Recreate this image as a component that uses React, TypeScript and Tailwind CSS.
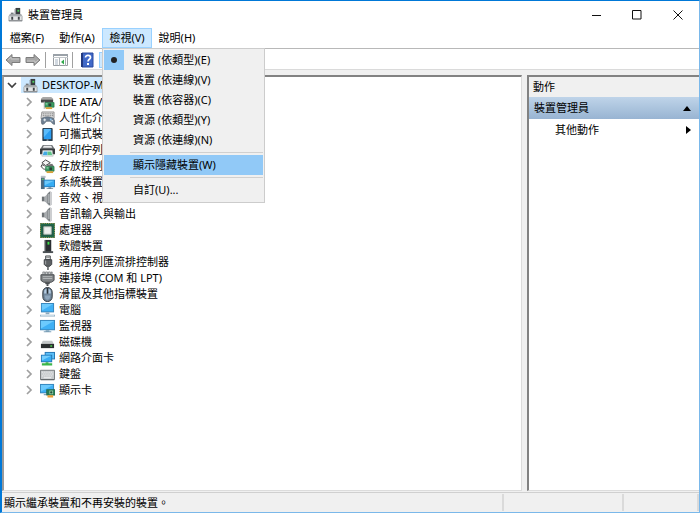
import React, { useState } from "react";

interface IconProps {
  className?: string;
}

type Icon = React.FC<IconProps>;

const Svg: React.FC<{ className?: string; children: React.ReactNode }> = ({
  className = "size-[15px]",
  children,
}) => (
  <svg viewBox="0 0 16 16" className={`shrink-0 ${className}`} aria-hidden="true">
    {children}
  </svg>
);

const ComputerIcon: Icon = ({ className }) => (
  <Svg className={className}>
    <path d="M8 1h5v8H8z" fill="#3a3e42" />
    <path d="M7 2h1v7H7z" fill="#8d9296" />
    <path d="M10 3h2v2h-2z" fill="#4fcf5e" />
    <path d="M3 6h3v3H3z" fill="#777c80" />
    <path d="M1 10l1-2h12l1 2v5H1z" fill="#e3e5e6" stroke="#8f9397" strokeWidth=".8" />
    <path d="M2 8h12v2H2z" fill="#a9adb0" />
    <path d="M3.500 10.500h2v3h-2zM10.500 10.500h2v3h-2z" fill="#3f4347" />
    <path d="M1 14.500h14" stroke="#85898d" />
  </Svg>
);

const IdeIcon: Icon = () => (
  <Svg>
    <path d="M1 4l2-2h9l2 2v2H1z" fill="#a8a8a8" />
    <path d="M1 5h13v3H1z" fill="#474747" />
    <path d="M5 8h10v5H5z" fill="#3b9c63" stroke="#1f6d40" strokeWidth=".7" />
    <path d="M9 9h3v3H9z" fill="#2b3f36" />
    <path d="M6 9h2v1H6z" fill="#b8e0c5" />
    <path d="M6 13h7v2H6z" fill="#d8a33c" />
    <path d="M4 7h1v8H4z" fill="#b0b0b0" />
  </Svg>
);

const HidIcon: Icon = () => (
  <Svg>
    <path d="M2 1h13v7H1z" fill="#dcdcdc" stroke="#7d7d7d" strokeWidth=".8" />
    <path d="M3 3h11M3 5h11" stroke="#666" strokeDasharray="1 1" />
    <path d="M4 7c2-1 6-1 8 0 3 0 4 4 4 7-2 1-3-1-5-3H7c-2 2-3 4-5 3-1-3-1-7 2-7z" fill="#6d7f92" stroke="#4c5966" strokeWidth=".6" />
    <path d="M3.500 9.500h3M5 8v3" stroke="#f0f4f8" />
    <circle cx="11.500" cy="9" r="1" fill="#8fc8f2" />
    <circle cx="13" cy="10.500" r=".8" fill="#f0f4f8" />
  </Svg>
);

const PortableIcon: Icon = () => (
  <Svg>
    <rect x="2.500" y="1" width="11" height="14" rx="1" fill="#2b3b49" />
    <path d="M4 2h8v11H4z" fill="#2c9df0" />
    <path d="M4 2h8L4 11z" fill="#5cbcfb" />
    <path d="M7 14h2" stroke="#c9d0d5" />
  </Svg>
);

const PrinterIcon: Icon = () => (
  <Svg>
    <path d="M3 2h10l3 5H0z" fill="#6d7174" />
    <path d="M4 3h8l1 2H3z" fill="#e9eaeb" />
    <path d="M0 6h16v6h-3V8H3v4H0z" fill="#383c3f" />
    <path d="M3 8h10l1 6H2z" fill="#fff" stroke="#9a9ea1" strokeWidth=".6" />
    <path d="M4 9h4v4H3z" fill="#43a9e4" />
    <path d="M8 9h4l1 4H8z" fill="#5fc488" />
  </Svg>
);

const StorageIcon: Icon = () => (
  <Svg>
    <path d="M6 1l5 3-5 3-4-3z" fill="#f5f5f5" stroke="#3c3c3c" />
    <path d="M2 6c-1 3 1 5 4 5M1 8l1.500-2L5 7.500" fill="none" stroke="#3c3c3c" />
    <path d="M8 6l5-1 2 3H7z" fill="#707070" />
    <path d="M6 8h9v5H6z" fill="#3b9c63" stroke="#1f6d40" strokeWidth=".7" />
    <path d="M10 9h3v3h-3z" fill="#2b3f36" />
    <path d="M7 9h2v1H7z" fill="#b8e0c5" />
    <path d="M7 13h7v2H7z" fill="#d8a33c" />
  </Svg>
);

const SystemIcon: Icon = () => (
  <Svg>
    <path d="M1 1h4v14H1z" fill="#4c6a80" />
    <path d="M1 1h5v2H1z" fill="#b9c0c5" />
    <path d="M2 4h2v1H2z" fill="#61e160" />
    <path d="M4 5h12v8H4z" fill="#2d7fba" />
    <path d="M5 6h10v6H5z" fill="#37adf4" />
    <path d="M5 6h10L5 11z" fill="#6cc9fb" />
    <path d="M9 13h3v1h2v1H7v-1h2z" fill="#6f8797" />
  </Svg>
);

const SpeakerIcon: Icon = () => (
  <Svg>
    <path d="M2 6h3v5H2z" fill="#6d7276" />
    <path d="M5 6l5-5v15l-5-5z" fill="#a9adb0" />
    <path d="M8 3l3-3v16l-3-3z" fill="#74797d" />
    <path d="M9.500 3v10" stroke="#d2d5d7" />
    <path d="M12 1v14" stroke="#b7bbbe" />
  </Svg>
);

const CpuIcon: Icon = () => (
  <Svg>
    <path d="M0 0h16v16H0z" fill="#1f6a4c" />
    <path d="M.5.500h15v15H.500z" fill="none" stroke="#b89f5a" strokeDasharray="1 1" />
    <path d="M2 2h12v12H2z" fill="#245c47" />
    <path d="M4 4h8v8H4z" fill="#eef0ef" stroke="#a7b3ac" />
  </Svg>
);

const SoftwareIcon: Icon = () => (
  <Svg>
    <path d="M5 1h7v13H5z" fill="#2b2f32" />
    <path d="M5 1h1v13H5z" fill="#6a6f73" />
    <path d="M8 3h2v3H8z" fill="#3fe04a" />
    <path d="M3 13h11v2H3z" fill="#4b5054" />
  </Svg>
);

const UsbIcon: Icon = () => (
  <Svg>
    <path d="M6 1h5v4H6z" fill="#e3e5e6" stroke="#4a4e51" />
    <path d="M7 2.500h1M9 2.500h1" stroke="#333" />
    <path d="M4.500 5h8v5l-2 2h-4l-2-2z" fill="#5d6164" stroke="#3c4043" />
    <path d="M6 6v4" stroke="#a6aaad" />
    <path d="M8.500 12v4" stroke="#4a4e51" strokeWidth="1.500" />
  </Svg>
);

const PortIcon: Icon = () => (
  <Svg>
    <path d="M3 1h2v2h1V1h2v2h1V1h2v2h1V1h1v4H3z" fill="#d4d6d8" stroke="#65696c" strokeWidth=".7" />
    <path d="M1 4h14v6l-3 2H4l-3-2z" fill="#808487" stroke="#45494c" />
    <path d="M3 6h10M3 8h10" stroke="#b4b8ba" />
    <path d="M5 12h6l-1 2H6z" fill="#4a4e51" />
    <path d="M8 14v2" stroke="#4a4e51" strokeWidth="2" />
  </Svg>
);

const MouseIcon: Icon = () => (
  <Svg>
    <rect x="3" y=".5" width="10" height="15" rx="5" fill="#71879c" stroke="#2c3237" />
    <path d="M4.500 5c0-2 1-3 2.500-3v5H4.500zM9 2c1.500 0 2.500 1 2.500 3v2H9z" fill="#b4cbe0" />
    <path d="M8 1v6" stroke="#2b3136" strokeWidth="1.500" />
    <path d="M5 9c0 6 6 6 6 0z" fill="#8ea6bc" />
  </Svg>
);

const MonitorIcon: Icon = () => (
  <Svg>
    <path d="M0 1h16v11H0z" fill="#3a86bb" />
    <path d="M1 2h14v9H1z" fill="#3fb0f5" />
    <path d="M1 2h14L1 10z" fill="#6ccafd" />
    <path d="M6 12h4v1h2v1H4v-1h2z" fill="#7ba0b8" />
  </Svg>
);

const PcIcon: Icon = () => (
  <Svg>
    <path d="M1 0h14v10H1z" fill="#3a86bb" />
    <path d="M2 1h12v8H2z" fill="#3fb0f5" />
    <path d="M2 1h12L2 8z" fill="#6ccafd" />
    <path d="M6 10h4v2H6z" fill="#8ba9be" />
    <path d="M0 12.500h16v2H0z" fill="#9ab6ca" />
    <path d="M1 13.500h14" stroke="#d5e3ed" />
  </Svg>
);

const DiskIcon: Icon = () => (
  <Svg>
    <path d="M3 6h10l2 4H1z" fill="#c4c7c9" />
    <path d="M1 9.500h14V14H1z" fill="#2b2e30" />
    <path d="M11 11h2v1.500h-2z" fill="#4fe04d" />
  </Svg>
);

const NetworkIcon: Icon = () => (
  <Svg>
    <path d="M5 1h11v8H5z" fill="#2777b4" />
    <path d="M6 2h9v6H6z" fill="#5cc0f8" />
    <path d="M1 4h12v8H1z" fill="#2777b4" />
    <path d="M2 5h10v6H2z" fill="#37adf4" />
    <path d="M2 5h10L2 10z" fill="#75cefd" />
    <path d="M6 12h3v1h4v2.500H2V13h4z" fill="#3bb54a" />
  </Svg>
);

const KeyboardIcon: Icon = () => (
  <Svg>
    <path d="M.5 3.500h15v10H.500z" fill="#c6c9cb" stroke="#73777a" />
    <path d="M2 5.500h12M3 7.500h11M2 9.500h12" stroke="#f5f5f5" strokeDasharray="1 1" />
    <path d="M4 11.500h8" stroke="#f5f5f5" />
    <path d="M1 13.500h14" stroke="#5b5f62" />
  </Svg>
);

const DisplayIcon: Icon = () => (
  <Svg>
    <path d="M0 1h15v10H0z" fill="#3a86bb" />
    <path d="M1 2h13v8H1z" fill="#3fb0f5" />
    <path d="M1 2h13L1 9z" fill="#6ccafd" />
    <path d="M4 12h3v1H4z" fill="#5d89a6" />
    <path d="M7 7h9v6H7z" fill="#277c55" stroke="#1e5c40" strokeWidth=".6" />
    <path d="M10 8h4v4h-4z" fill="#8cc7a0" />
    <circle cx="12" cy="10" r="1.200" fill="#23523d" />
    <path d="M8 13h6v2.500H8z" fill="#eba13a" />
  </Svg>
);

const ArrowIcon: Icon = ({ className = "" }) => (
  <svg viewBox="0 0 16 14" className={`h-[14px] w-4 shrink-0 ${className}`} aria-hidden="true">
    <path d="M1 7l6-5.500v3h8v5H7v3z" fill="#a6a6a6" stroke="#7d7d7d" strokeLinejoin="round" />
    <path d="M3 7l3-3v2h8" fill="none" stroke="#c4c4c4" />
  </svg>
);

const ConsoleIcon: Icon = () => (
  <Svg className="size-4">
    <path d="M1.500 2.500h14v11h-14z" fill="#fff" stroke="#979ca1" />
    <path d="M1 2h15v2H1z" fill="#9aa1a8" />
    <path d="M1 5.500h15" stroke="#c1c6ca" />
    <path d="M3 8h3M3 10h3M3 12h3" stroke="#a4b2c1" />
    <path d="M7.500 6v8M13.500 6v8" stroke="#a9afb4" />
    <path d="M12 7.500v5L9 10z" fill="#2fa84a" />
  </Svg>
);

const HelpIcon: Icon = () => (
  <Svg className="size-4">
    <path d="M3 1h11v14H3z" fill="#4169c8" stroke="#2b4a9f" />
    <path d="M2 1h2v14H2z" fill="#22397f" />
    <path d="M6.500 5.500c0-3 5-2.500 5 0 0 1.700-2.500 1.900-2.500 4" fill="none" stroke="#fff" strokeWidth="1.700" />
    <path d="M8 11h2v2H8z" fill="#fff" />
  </Svg>
);

const Chevron: React.FC<{ open?: boolean }> = ({ open }) => (
  <svg viewBox="0 0 10 10" className="size-[10px] shrink-0" fill="none" aria-hidden="true">
    {open ? (
      <path d="M1 3l4 4 4-4" stroke="#404040" strokeWidth="1.700" />
    ) : (
      <path d="M3 1l4 4-4 4" stroke="#a0a0a0" strokeWidth="1.700" />
    )}
  </svg>
);

const devices: { name: string; icon: Icon }[] = [
  { name: "IDE ATA/", icon: IdeIcon },
  { name: "人性化介", icon: HidIcon },
  { name: "可攜式裝", icon: PortableIcon },
  { name: "列印佇列", icon: PrinterIcon },
  { name: "存放控制", icon: StorageIcon },
  { name: "系統裝置", icon: SystemIcon },
  { name: "音效、視", icon: SpeakerIcon },
  { name: "音訊輸入與輸出", icon: SpeakerIcon },
  { name: "處理器", icon: CpuIcon },
  { name: "軟體裝置", icon: SoftwareIcon },
  { name: "通用序列匯流排控制器", icon: UsbIcon },
  { name: "連接埠 (COM 和 LPT)", icon: PortIcon },
  { name: "滑鼠及其他指標裝置", icon: MouseIcon },
  { name: "電腦", icon: PcIcon },
  { name: "監視器", icon: MonitorIcon },
  { name: "磁碟機", icon: DiskIcon },
  { name: "網路介面卡", icon: NetworkIcon },
  { name: "鍵盤", icon: KeyboardIcon },
  { name: "顯示卡", icon: DisplayIcon },
];

const viewModes = [
  "裝置 (依類型)(E)",
  "裝置 (依連線)(V)",
  "裝置 (依容器)(C)",
  "資源 (依類型)(Y)",
  "資源 (依連線)(N)",
];

const MenuItem: React.FC<{
  label: string;
  checked?: boolean;
  active?: boolean;
  onClick?: () => void;
}> = ({ label, checked, active, onClick }) => (
  <button
    role="menuitem"
    onClick={onClick}
    className={`flex h-5 w-full items-center gap-[9px] text-left ${
      active ? "bg-[#91c9f7]" : "hover:bg-[#91c9f7]"
    }`}
  >
    <span
      className={`flex h-5 w-5 items-center justify-center ${checked ? "bg-[#91c9f7]" : ""}`}
    >
      {checked && <span className="size-[6px] rounded-full bg-[#222]" />}
    </span>
    {label}
  </button>
);

const MenuLine = () => (
  <div className="flex h-[5px] items-center pl-[26px]">
    <div className="h-px w-full bg-[#d0d0d0]" />
  </div>
);

const ViewMenu: React.FC = () => {
  const [mode, setMode] = useState(0);

  return (
    <div
      role="menu"
      className="absolute top-full left-0 z-10 w-[163px] border border-[#cccccc] bg-[#f0f0f0] p-px pb-0.5"
    >
      {viewModes.map((label, i) => (
        <MenuItem key={label} label={label} checked={i === mode} onClick={() => setMode(i)} />
      ))}
      <MenuLine />
      <MenuItem label="顯示隱藏裝置(W)" active />
      <MenuLine />
      <MenuItem label="自訂(U)..." />
    </div>
  );
};

const TitleBar = () => (
  <header className="flex h-[27px] items-center pl-1.5">
    <ComputerIcon />
    <h1 className="flex-1 pl-[5px]">裝置管理員</h1>
    <button aria-label="最小化" className="flex h-full w-10 items-center justify-center">
      <svg viewBox="0 0 10 10" className="size-[10px]" stroke="#111" fill="none">
        <path d="M0 5.500h9" />
      </svg>
    </button>
    <button aria-label="最大化" className="flex h-full w-10 items-center justify-center">
      <svg viewBox="0 0 10 10" className="size-[10px]" stroke="#111" fill="none">
        <path d="M.5.500h8.500v8.500H.500z" />
      </svg>
    </button>
    <button aria-label="關閉" className="flex h-full w-[42px] items-center justify-center">
      <svg viewBox="0 0 10 10" className="size-[10px]" stroke="#111" fill="none">
        <path d="M.5.500l9 9M9.500.500l-9 9" />
      </svg>
    </button>
  </header>
);

const MenuBar: React.FC = () => {
  const [open, setOpen] = useState(true);

  return (
    <nav className="flex h-5">
      <button className="w-[50px]">檔案(F)</button>
      <button className="w-[50px]">動作(A)</button>
      <div className="relative">
        <button
          onClick={() => setOpen(!open)}
          className="h-full w-[50px] border border-[#99d1ff] bg-[#cce8ff]"
        >
          檢視(V)
        </button>
        {open && <ViewMenu />}
      </div>
      <button className="w-[50px]">說明(H)</button>
    </nav>
  );
};

const Toolbar = () => (
  <div className="flex h-[21px] items-center border-t border-[#b8b8b8] pt-0.5 pl-[3px]">
    <button aria-label="上一頁">
      <ArrowIcon />
    </button>
    <button aria-label="下一頁" className="ml-1">
      <ArrowIcon className="rotate-180" />
    </button>
    <span className="ml-1 h-4 w-px bg-[#a0a0a0]" />
    <button aria-label="主控台樹狀目錄" className="ml-1.5">
      <ConsoleIcon />
    </button>
    <span className="ml-1 h-4 w-px bg-[#a0a0a0]" />
    <button aria-label="說明" className="ml-1.5">
      <HelpIcon />
    </button>
    <button aria-label="檢視" className="ml-1 h-4 w-5 border border-[#99d1ff] bg-[#cce8ff]" />
  </div>
);

const DeviceTree = () => (
  <section className="min-w-0 flex-1 border-2 border-r border-b border-t-[#828282] border-r-[#dcdcdc] border-b-[#dcdcdc] border-l-[#9a9a9a] bg-white">
    <div className="flex h-4 items-center">
      <button aria-label="收合" className="ml-[3px]">
        <Chevron open />
      </button>
      <span className="ml-1 flex h-full items-center gap-1 bg-[#cce8ff] pr-1 pl-0.5">
        <ComputerIcon />
        DESKTOP-M
      </span>
    </div>
    <ul className="mt-px">
      {devices.map(({ name, icon: DeviceIcon }) => (
        <li key={name} className="flex h-4 items-center pl-5">
          <button aria-label="展開">
            <Chevron />
          </button>
          <span className="flex items-center gap-1 pl-1.5 whitespace-nowrap">
            <DeviceIcon />
            {name}
          </span>
        </li>
      ))}
    </ul>
  </section>
);

const ActionPane = () => (
  <aside className="w-[172px] border-t-2 border-b border-l-2 border-t-[#828282] border-b-[#dcdcdc] border-l-[#828282] bg-white">
    <h2 className="flex h-5 items-center bg-[#f0f0f0] pl-1">動作</h2>
    <button className="flex h-[22px] w-full items-center justify-between bg-linear-to-b from-[#bfd4e9] to-[#98b4d2] pr-2 pl-[5px]">
      裝置管理員
      <svg viewBox="0 0 8 5" className="h-[5px] w-2" aria-hidden="true">
        <path d="M4 0l4 5H0z" fill="#000" />
      </svg>
    </button>
    <button className="flex h-[22px] w-full items-center justify-between pr-2 pl-[26px]">
      其他動作
      <svg viewBox="0 0 5 8" className="h-2 w-[5px]" aria-hidden="true">
        <path d="M0 0l5 4-5 4z" fill="#000" />
      </svg>
    </button>
  </aside>
);

const StatusBar = () => (
  <footer className="flex h-5 items-center border-t border-[#d0d0d0] bg-[#f0f0f0]">
    <p className="flex-1 pl-0.5">顯示繼承裝置和不再安裝的裝置。</p>
    <span className="h-[17px] w-[120px] border-l-2 border-[#dadada]" />
    <span className="h-[17px] w-[77px] border-x-2 border-[#dadada]" />
  </footer>
);

export default function App() {
  return (
    <div className="flex min-h-screen flex-col border-t border-r border-b border-l-2 border-t-[#0078d7] border-r-[#7ab8ea] border-b-[#7ab8ea] border-l-[#0078d7] bg-white font-['Noto_Sans','Noto_Sans_CJK_TC',sans-serif] text-[11px] leading-4 text-black">
      <TitleBar />
      <MenuBar />
      <Toolbar />
      <main className="flex flex-1 gap-[5px] border-t border-[#dadada] bg-[#f0f0f0] pt-[5px] pb-px">
        <DeviceTree />
        <ActionPane />
      </main>
      <StatusBar />
    </div>
  );
}
